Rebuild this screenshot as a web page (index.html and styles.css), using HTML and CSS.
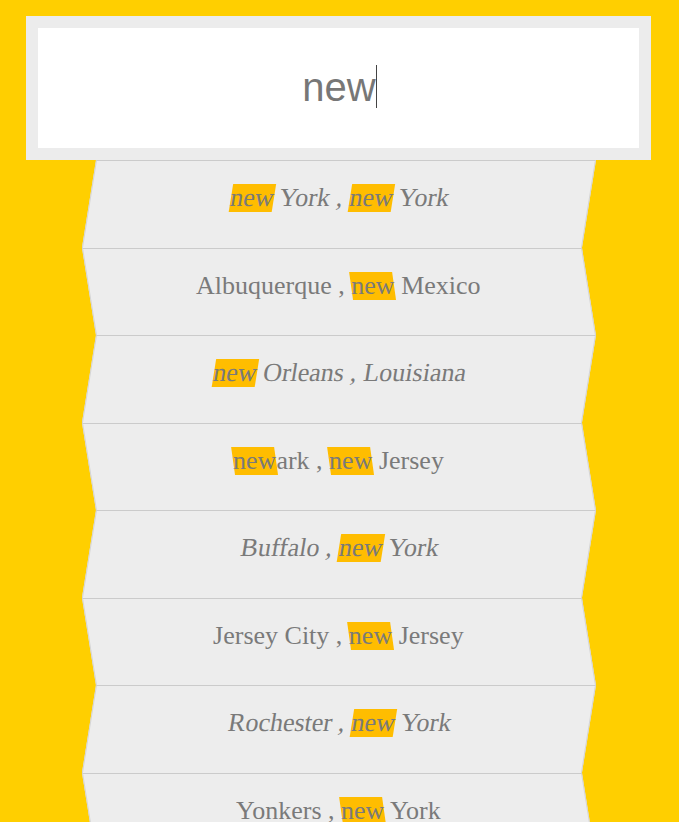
FILE: index.html
```html
<!DOCTYPE html>
<html lang="en">
<head>
<meta charset="utf-8">
<title>Type Ahead</title>
<link rel="stylesheet" href="styles.css">
</head>
<body>
<form class="search-form">
  <div class="search">
    <span class="search-text">new</span><span class="caret"></span>
  </div>
  <ul class="suggestions">
    <li><span class="name"><span class="hl">new</span> York , <span class="hl">new</span> York</span></li>
    <li><span class="name">Albuquerque , <span class="hl">new</span> Mexico</span></li>
    <li><span class="name"><span class="hl">new</span> Orleans , Louisiana</span></li>
    <li><span class="name"><span class="hl">new</span>ark , <span class="hl">new</span> Jersey</span></li>
    <li><span class="name">Buffalo , <span class="hl">new</span> York</span></li>
    <li><span class="name">Jersey City , <span class="hl">new</span> Jersey</span></li>
    <li><span class="name">Rochester , <span class="hl">new</span> York</span></li>
    <li><span class="name">Yonkers , <span class="hl">new</span> York</span></li>
    <li><span class="name">Syracuse , <span class="hl">new</span> York</span></li>
    <li><span class="name">Paterson , <span class="hl">new</span> Jersey</span></li>
  </ul>
</form>
</body>
</html>
```

FILE: styles.css
```css
html {
  background: #ffcf00;
}
body {
  margin: 0;
  overflow: hidden;
  height: 822px;
}
.search-form {
  width: 625px;
  margin: 16px 0 0 26px;
}
.search {
  box-sizing: border-box;
  height: 144px;
  border: 12px solid #ececec;
  background: #fff;
  display: flex;
  align-items: center;
  justify-content: center;
  padding-bottom: 2px;
}
.search-text {
  font-family: "Liberation Sans", Arial, sans-serif;
  font-size: 40px;
  color: #777;
  line-height: 44px;
  margin-left: 2px;
}
.caret {
  display: inline-block;
  width: 1px;
  height: 43px;
  background: #444;
  margin-left: 0;
  margin-bottom: 2px;
}
.suggestions {
  list-style: none;
  margin: 0 auto;
  padding: 0;
  width: 500px;
}
.suggestions li {
  box-sizing: border-box;
  height: 87.5px;
  background: #ededed;
  border-top: 1px solid #cbcbcb;
  border-left: 1px solid #d4d4d4;
  border-right: 1px solid #d4d4d4;
  display: flex;
  justify-content: center;
  align-items: flex-start;
  padding-top: 23px;
  font-family: "Liberation Serif", "Times New Roman", serif;
  font-size: 26px;
  color: #7a7a7a;
}
.suggestions li:nth-child(odd) {
  transform: skewX(-9.1deg);
}
.suggestions li:nth-child(even) {
  transform: skewX(9.1deg);
}
.suggestions li:nth-child(even) .name {
  transform: skewX(-9.1deg);
}
.name {
  display: inline-block;
  line-height: 28px;
  white-space: pre;
}
.hl {
  display: inline-block;
  position: relative;
  z-index: 0;
}
.hl::before {
  content: "";
  position: absolute;
  left: 0;
  right: 0;
  top: 0;
  bottom: 0;
  background: #ffbd00;
  z-index: -1;
}
.suggestions li:nth-child(even) .hl::before {
  transform: skewX(8deg);
}
```
